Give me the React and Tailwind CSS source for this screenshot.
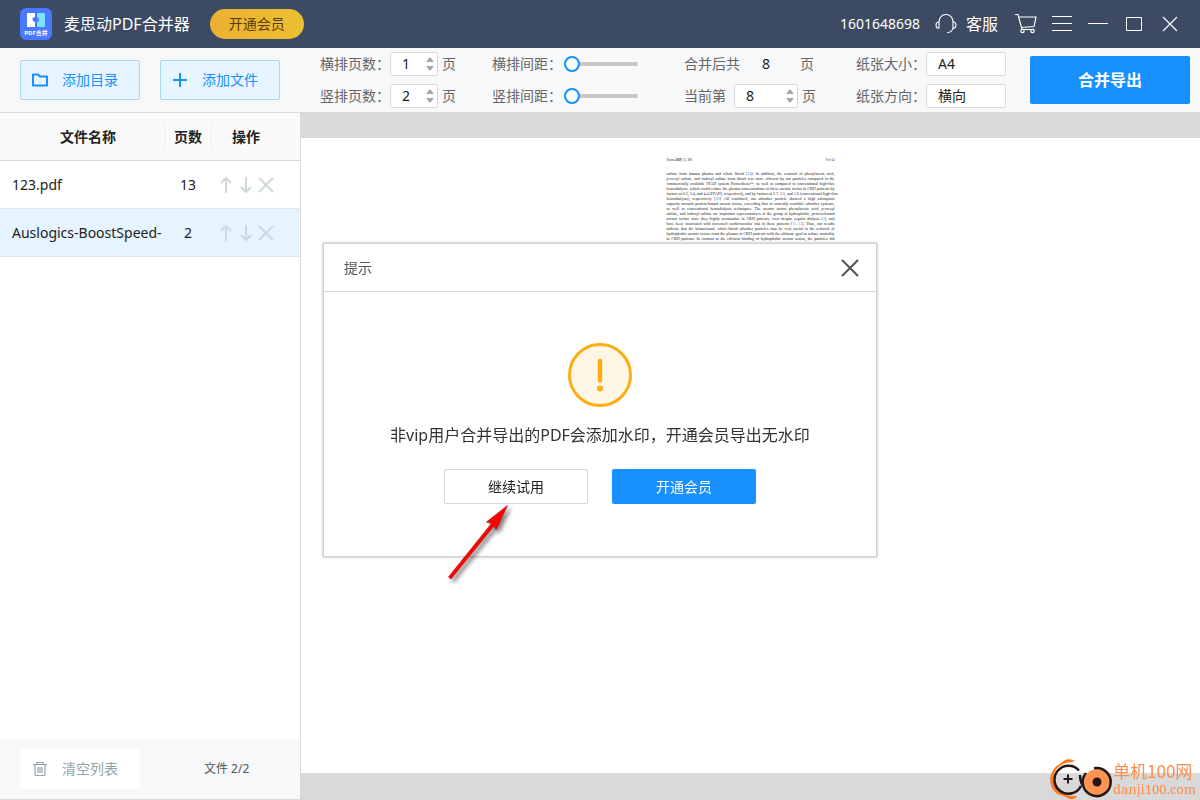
import React, { useState } from 'react';

const files = [
  { id: 1, name: '123.pdf', pages: 13 },
  { id: 2, name: 'Auslogics-BoostSpeed-', pages: 2 }
];

const documentLines = [
  ['sulfate from human plasma and whole blood [', '54', ']. In addition, the removal of phenylacetic acid,'],
  ['p-cresyl sulfate, and indoxyl sulfate from blood was more efficient by our particles compared to the'],
  ['commercially available FPAD system Prometheus™, as well as compared to conventional high-flux'],
  ['hemodialysis, which could reduce the plasma concentrations of these uremic toxins in CKD patients by'],
  ['factors of 6.2, 3.4, and 4.4 (FPAD), respectively, and by factors of 2.7, 1.5, and 1.6 (conventional high-flux'],
  ['hemodialysis), respectively [', '56', ']. All combined, our adsorber particle showed a high adsorption'],
  ['capacity towards protein-bound uremic toxins, exceeding that of currently available adsorber systems,'],
  ['as well as conventional hemodialysis techniques. The uremic toxins phenylacetic acid, p-cresyl'],
  ['sulfate, and indoxyl sulfate are important representatives of the group of hydrophobic, protein-bound'],
  ['uremic toxins since they highly accumulate in CKD patients, even despite regular dialysis [', '2', '], and'],
  ['have been associated with increased cardiovascular risk in these patients [', '11–13', ']. Thus, our results'],
  ['indicate that the bifunctional, whole-blood adsorber particles may be very useful in the removal of'],
  ['hydrophobic uremic toxins from the plasma of CKD patients with the ultimate goal to reduce mortality'],
  ['in CKD patients. In contrast to the efficient binding of hydrophobic uremic toxins, the particles did']
];

const AppLogo = () => (
  <svg className="h-8 w-8" viewBox="0 0 32 32">
    <rect width="32" height="32" rx="6" fill="#4a78ff" />
    <path d="M7 5h8v4a2.500 2.500 0 0 0 0 5v5H7z" fill="#fff" />
    <path d="M17 5h8v14h-8v-4.500a3 3 0 0 0 0-5.500z" fill="#7be3fb" />
    <text x="16" y="27" fontSize="6" fontWeight="700" fill="#fff" textAnchor="middle">PDF合并</text>
  </svg>
);

const FolderIcon = () => (
  <svg className="h-4 w-4" viewBox="0 0 16 16" fill="none" stroke="#1890ff" strokeWidth="2" strokeLinejoin="round">
    <path d="M1 2.500h5l2 2h7v9H1z" />
  </svg>
);

const PlusIcon = () => (
  <svg className="h-4 w-4" viewBox="0 0 16 16" stroke="#1890ff" strokeWidth="2">
    <path d="M8 1v14M1 8h14" />
  </svg>
);

const HeadsetIcon = () => (
  <svg className="h-6 w-6" viewBox="0 0 24 24" fill="none" stroke="#fff" strokeWidth="1.1">
    <path d="M5 16.500V9.500M5 10C5 5.500 8 2.500 12 2.500S19 5.500 19 10M19 9.500v7" />
    <path d="M5 10c-2 0-3 1.200-3 3s1 3.300 3 3.300M19 10c2 0 3 1.200 3 3s-1 3.300-3 3.300" />
    <path d="M19 16c-.6 2.800-2.500 4.500-6 4.700" />
  </svg>
);

const CartIcon = () => (
  <svg className="h-6 w-6" viewBox="0 0 24 24" fill="none" stroke="#fff" strokeWidth="1.200">
    <path d="M1 2.500h3l4 15h12M5 5h17l-2 9.500L7.300 15.500" />
    <circle cx="8.500" cy="19" r="1.700" />
    <circle cx="18.500" cy="19" r="1.700" />
  </svg>
);

const TrashIcon = () => (
  <svg className="h-4 w-4" viewBox="0 0 16 16" fill="none" stroke="#8fa3ab" strokeWidth="1.200">
    <path d="M1 3.500h14M5 3.500V1.500h6v2M3 3.500v9.500a1.500 1.500 0 0 0 1.500 1.500h7A1.500 1.500 0 0 0 13 13V3.500M6 6v6M8 6v6M10 6v6" />
  </svg>
);

const ArrowUpIcon = () => (
  <svg className="h-5 w-5" viewBox="0 0 20 20" fill="none" stroke="#cfd8dc" strokeWidth="2">
    <path d="M10 18V3M5 8l5-5 5 5" />
  </svg>
);

const ArrowDownIcon = () => (
  <svg className="h-5 w-5" viewBox="0 0 20 20" fill="none" stroke="#cfd8dc" strokeWidth="2">
    <path d="M10 2v15M5 12l5 5 5-5" />
  </svg>
);

const CrossIcon = ({ color, width }) => (
  <svg className="h-5 w-5" viewBox="0 0 20 20" fill="none" stroke={color} strokeWidth={width}>
    <path d="M3 3l14 14M17 3L3 17" />
  </svg>
);

const NumberBox = ({ id, value, onChange, className }) => (
  <div className={`flex h-6 items-center justify-between rounded-xs border border-[#d9d9d9] bg-white ${className}`}>
    <input
      id={id}
      type="text"
      value={value}
      onChange={e => onChange(Number(e.target.value) || 1)}
      className="w-[30px] text-center text-[#222] outline-none"
    />
    <div className="flex flex-col gap-1 pr-[3px]">
      <button type="button" aria-label="+" onClick={() => onChange(value + 1)}>
        <svg className="h-[5px] w-2" viewBox="0 0 8 5"><path d="M4 0l4 5H0z" fill="#a6a6a6" /></svg>
      </button>
      <button type="button" aria-label="-" onClick={() => onChange(Math.max(1, value - 1))}>
        <svg className="h-[5px] w-2" viewBox="0 0 8 5"><path d="M0 0h8L4 5z" fill="#a6a6a6" /></svg>
      </button>
    </div>
  </div>
);

const GapSlider = ({ id }) => (
  <input
    id={id}
    type="range"
    min="0"
    max="100"
    defaultValue="0"
    className="h-4 w-[74px] appearance-none bg-transparent [&::-webkit-slider-runnable-track]:h-1 [&::-webkit-slider-runnable-track]:rounded-full [&::-webkit-slider-runnable-track]:bg-[#c8c8c8] [&::-webkit-slider-thumb]:-mt-1.5 [&::-webkit-slider-thumb]:h-4 [&::-webkit-slider-thumb]:w-4 [&::-webkit-slider-thumb]:appearance-none [&::-webkit-slider-thumb]:rounded-full [&::-webkit-slider-thumb]:border-2 [&::-webkit-slider-thumb]:border-[#1890ff] [&::-webkit-slider-thumb]:bg-white"
  />
);

const TitleBar = () => (
  <header className="flex h-12 shrink-0 items-center justify-between bg-[#3d4a63] px-5 text-white">
    <div className="flex items-center">
      <AppLogo />
      <h1 className="ml-3 text-base">麦思动PDF合并器</h1>
      <button type="button" className="ml-5 h-[30px] w-[94px] rounded-full bg-gradient-to-r from-[#ecb033] to-[#ecbf33] text-sm text-[#5c3a0a]">
        开通会员
      </button>
    </div>
    <div className="flex items-center">
      <span className="text-sm">1601648698</span>
      <button type="button" className="ml-3.5 flex items-center gap-2 text-base">
        <HeadsetIcon />
        客服
      </button>
      <button type="button" aria-label="购物车" className="ml-4"><CartIcon /></button>
      <button type="button" aria-label="菜单" className="ml-3.5">
        <svg className="h-5 w-5" viewBox="0 0 20 20" stroke="#fff"><path d="M0 2.500h20M0 9.500h20M0 16.500h20" /></svg>
      </button>
      <button type="button" aria-label="最小化" className="ml-4">
        <svg className="h-5 w-5" viewBox="0 0 20 20" stroke="#fff"><path d="M0 9.500h20" /></svg>
      </button>
      <button type="button" aria-label="最大化" className="ml-4">
        <svg className="h-5 w-5" viewBox="0 0 20 20" stroke="#fff" fill="none"><path d="M2.500 3.500h15v13h-15z" /></svg>
      </button>
      <button type="button" aria-label="关闭" className="ml-4"><CrossIcon color="#fff" width="1.200" /></button>
    </div>
  </header>
);

const Toolbar = () => {
  const [columns, setColumns] = useState(1);
  const [rows, setRows] = useState(2);
  const [current, setCurrent] = useState(8);

  return (
    <div className="flex h-16 shrink-0 items-center bg-[#f7f8fa] pr-2.5 pl-5 text-sm text-[#666]">
      <div className="flex gap-5">
        <button type="button" className="flex h-10 w-[120px] items-center gap-3.5 rounded-xs border border-[#a5d8f0] bg-[#e6f5ff] pl-[11px] text-[#1890ff]">
          <FolderIcon />
          添加目录
        </button>
        <button type="button" className="flex h-10 w-[120px] items-center gap-3.5 rounded-xs border border-[#a5d8f0] bg-[#e6f5ff] pl-[11px] text-[#1890ff]">
          <PlusIcon />
          添加文件
        </button>
      </div>

      <div className="ml-10 flex gap-9">
        <div className="flex w-[136px] flex-col gap-2">
          <div className="flex h-6 items-center">
            <label htmlFor="columns" className="w-[70px]">横排页数：</label>
            <NumberBox id="columns" value={columns} onChange={setColumns} className="w-12" />
            <span className="ml-1">页</span>
          </div>
          <div className="flex h-6 items-center">
            <label htmlFor="rows" className="w-[70px]">竖排页数：</label>
            <NumberBox id="rows" value={rows} onChange={setRows} className="w-12" />
            <span className="ml-1">页</span>
          </div>
        </div>

        <div className="flex w-[156px] flex-col gap-2">
          <div className="flex h-6 items-center">
            <label htmlFor="columnGap" className="w-[72px]">横排间距：</label>
            <GapSlider id="columnGap" />
          </div>
          <div className="flex h-6 items-center">
            <label htmlFor="rowGap" className="w-[72px]">竖排间距：</label>
            <GapSlider id="rowGap" />
          </div>
        </div>

        <div className="flex w-[136px] flex-col gap-2">
          <div className="flex h-6 items-center">
            <span className="w-[66px]">合并后共</span>
            <span className="w-8 text-center text-[#222]">8</span>
            <span className="ml-[18px]">页</span>
          </div>
          <div className="flex h-6 items-center">
            <label htmlFor="current" className="w-[50px]">当前第</label>
            <NumberBox id="current" value={current} onChange={setCurrent} className="w-16" />
            <span className="ml-1">页</span>
          </div>
        </div>

        <div className="flex flex-col gap-2">
          <div className="flex h-6 items-center">
            <label htmlFor="paperSize" className="w-[70px]">纸张大小：</label>
            <select id="paperSize" className="h-6 w-20 appearance-none rounded-xs border border-[#d9d9d9] bg-white pl-[11px] text-[#222]">
              <option>A4</option>
              <option>A3</option>
            </select>
          </div>
          <div className="flex h-6 items-center">
            <label htmlFor="direction" className="w-[70px]">纸张方向：</label>
            <select id="direction" className="h-6 w-20 appearance-none rounded-xs border border-[#d9d9d9] bg-white pl-[11px] text-[#222]">
              <option>横向</option>
              <option>纵向</option>
            </select>
          </div>
        </div>
      </div>

      <button type="button" className="ml-auto h-12 w-40 rounded-xs bg-[#1890ff] text-base font-bold text-white">
        合并导出
      </button>
    </div>
  );
};

const FileList = () => (
  <aside className="flex w-[301px] shrink-0 flex-col border-r border-b border-[#d9d9d9] bg-white">
    <table className="w-full table-fixed border-separate border-spacing-0 text-sm text-[#222]">
      <thead>
        <tr className="h-12 bg-[#fafafa]">
          <th className="border-b border-[#d9d9d9] pl-3">文件名称</th>
          <th className="w-12 border-b border-[#d9d9d9] p-0">
            <div className="border-x border-[#eee] leading-7">页数</div>
          </th>
          <th className="w-[88px] border-b border-[#d9d9d9] pr-5">操作</th>
        </tr>
      </thead>
      <tbody>
        {files.map(file => (
          <tr key={file.id} className={`h-12 ${file.id === 2 ? 'bg-[#e6f4ff]' : 'bg-white'}`}>
            <td className="overflow-hidden border-b border-[#e3e6e8] pl-3 text-clip whitespace-nowrap">{file.name}</td>
            <td className="border-b border-[#e3e6e8] text-center">{file.pages}</td>
            <td className="border-b border-[#e3e6e8] pr-5">
              <div className="flex justify-center">
                <button type="button" aria-label="上移"><ArrowUpIcon /></button>
                <button type="button" aria-label="下移"><ArrowDownIcon /></button>
                <button type="button" aria-label="删除"><CrossIcon color="#cfd8dc" width="2" /></button>
              </div>
            </td>
          </tr>
        ))}
      </tbody>
    </table>

    <div className="mt-auto flex h-[60px] items-center bg-[#f7f8fa] pl-5">
      <button type="button" className="flex h-10 w-[120px] items-center gap-3.5 rounded-xs bg-white pl-3 text-sm text-[#8fa3ab]">
        <TrashIcon />
        清空列表
      </button>
      <span className="ml-16 text-xs text-[#555]">文件 2/2</span>
    </div>
  </aside>
);

const Preview = () => (
  <main className="flex min-w-0 flex-1 flex-col bg-[#d9d9d9] pt-[25px] pb-[27px]">
    <div className="flex-1 overflow-hidden bg-white pt-5 font-['Liberation_Serif',serif] text-[4px] leading-[5px] text-[#222]">
      <div className="mx-auto w-[168px]">
        <div className="flex justify-between text-[3px]">
          <span>Toxins <b>2019</b>, 11, 389</span>
          <span>9 of 14</span>
        </div>
        <div className="mt-2">
          {documentLines.map(([before, cite, after]) => (
            <p key={before} className="whitespace-nowrap [text-align-last:justify]">
              {before}<span className="text-[#1890ff]">{cite}</span>{after}
            </p>
          ))}
        </div>
      </div>
    </div>
  </main>
);

const TipDialog = () => (
  <div className="fixed inset-0 flex items-center justify-center">
    <div role="dialog" className="w-[554px] border border-[#d0d0d0] bg-white shadow-[0_0_3px_rgba(0,0,0,0.3)]">
      <div className="flex h-12 items-center justify-between border-b border-[#d9d9d9] pr-4 pl-5">
        <h2 className="text-sm text-[#555]">提示</h2>
        <button type="button" aria-label="关闭提示">
          <svg className="h-5 w-5" viewBox="0 0 20 20" stroke="#555" strokeWidth="2">
            <path d="M2 2l16 16M18 2L2 18" />
          </svg>
        </button>
      </div>
      <div className="flex flex-col items-center pt-[51px] pb-[52px]">
        <svg className="h-16 w-16" viewBox="0 0 64 64">
          <circle cx="32" cy="32" r="30.500" fill="#fff7e6" stroke="#faad14" strokeWidth="3" />
          <path d="M32 18v19.500" stroke="#faad14" strokeWidth="4.500" strokeLinecap="round" />
          <circle cx="32" cy="45.500" r="3" fill="#faad14" />
        </svg>
        <p className="mt-4 text-base leading-6 text-[#333]">非vip用户合并导出的PDF会添加水印，开通会员导出无水印</p>
        <div className="mt-[22px] flex gap-6 text-sm">
          <button type="button" className="h-[35px] w-36 rounded-xs border border-[#d9d9d9] bg-white text-[#222]">继续试用</button>
          <button type="button" className="h-[35px] w-36 rounded-xs bg-[#1890ff] text-white">开通会员</button>
        </div>
      </div>
    </div>
    <svg className="absolute top-[500px] left-[440px] h-[90px] w-[80px] drop-shadow-[3px_3px_2px_rgba(0,0,0,0.5)]" viewBox="0 0 80 90">
      <path d="M67.500 5.500L46.500 22L51.500 23.500L8.500 77L11 79L54 26L56 30z" fill="#f00" stroke="#b22" strokeWidth="0.800" />
    </svg>
  </div>
);

const SiteMark = () => (
  <a href="#danji100" className="fixed right-1 bottom-0 flex items-center text-[#ff8c4a]">
    <svg className="h-[42px] w-16" viewBox="0 0 64 42" fill="none">
      <path d="M26 3C20 0 16 1 12 5C0 11-2 26 6 34C10 38 14 37 17 39C21 42 26 42 28 38C21 38 16 38 10 33C1 25 3 11 14 6C18 4 22 5 26 3z" fill="#ff7a1a" />
      <path d="M30 12.500A14 14 0 1 0 32 28" stroke="#231815" strokeWidth="2.500" />
      <path d="M31 17c0 4 1 8 3 11" stroke="#231815" strokeWidth="2.500" />
      <path d="M19 16.500v9M14.500 21h9" stroke="#231815" strokeWidth="2" />
      <circle cx="48" cy="24" r="13" fill="#ff9350" />
      <path d="M45 10.300A14 14 0 1 1 37 15" stroke="#231815" strokeWidth="2.500" />
      <circle cx="48" cy="24" r="4.500" fill="#231815" />
    </svg>
    <span className="flex flex-col">
      <span className="font-['Noto_Sans_CJK_SC',sans-serif] text-[17px] leading-5">单机100网</span>
      <span className="font-['Noto_Serif','Liberation_Serif',serif] text-[13px] leading-4">danji100.com</span>
    </span>
  </a>
);

const App = () => (
  <div className="flex h-screen flex-col overflow-hidden bg-[#f7f8fa] font-['Noto_Sans','Noto_Sans_CJK_SC',sans-serif]">
    <TitleBar />
    <Toolbar />
    <div className="flex min-h-0 flex-1 border-t border-[#d9d9d9]">
      <FileList />
      <Preview />
    </div>
    <TipDialog />
    <SiteMark />
  </div>
);

export default App;
